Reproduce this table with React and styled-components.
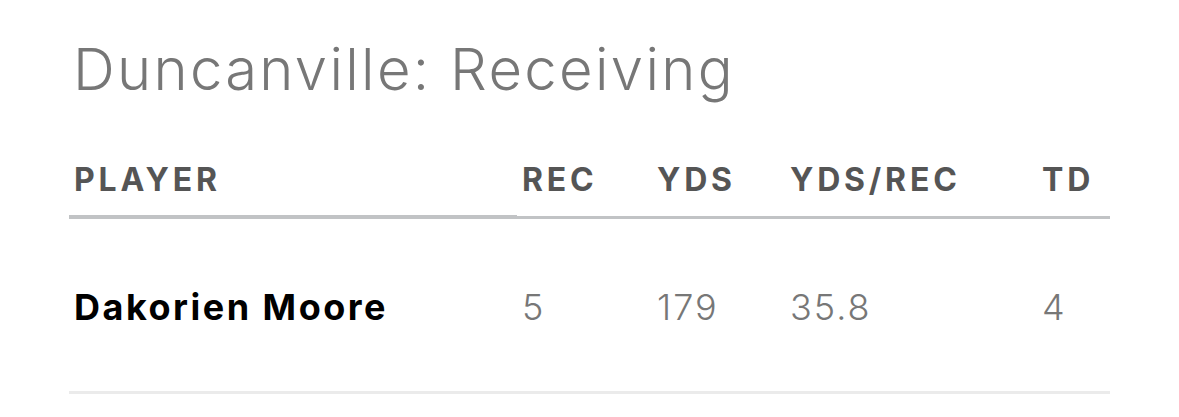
import React from 'react';
import styled, { createGlobalStyle } from 'styled-components';

const GlobalStyle = createGlobalStyle`
  html, body {
    margin: 0;
    padding: 0;
    background: #ffffff;
  }
  body {
    font-family: Inter, "Liberation Sans", sans-serif;
  }
`;

const Page = styled.section`
  width: 1179px;
  height: 417px;
  box-sizing: border-box;
  padding: 33px 69px 0 69px;
  background: #ffffff;
`;

const Title = styled.h2`
  margin: 0 0 0 4px;
  font-size: 58px;
  line-height: 72px;
  font-weight: 300;
  color: #777777;
  letter-spacing: 2.3px;
`;

const StatTable = styled.table`
  margin-top: 55px;
  width: 1041px;
  border-collapse: collapse;
  table-layout: fixed;
`;

const HeadCell = styled.th`
  box-sizing: border-box;
  width: ${p => p.$width}px;
  padding: 0 0 15px 5px;
  text-align: left;
  font-size: 32px;
  line-height: 40px;
  font-weight: 700;
  letter-spacing: 3.8px;
  color: #555555;
  border-bottom: ${p => (p.$first ? 4 : 3)}px solid #c1c3c5;
`;

const Cell = styled.td`
  box-sizing: border-box;
  height: 175px;
  padding: 4px 0 0 5px;
  font-size: 36px;
  font-weight: ${p => (p.$name ? 700 : 300)};
  color: ${p => (p.$name ? '#000000' : '#777777')};
  letter-spacing: ${p => (p.$name ? '2.5px' : '2px')};
  border-bottom: 3px solid #ebebeb;
`;

const columns = [
  { key: 'player', label: 'PLAYER', width: 448 },
  { key: 'rec', label: 'REC', width: 135 },
  { key: 'yds', label: 'YDS', width: 133 },
  { key: 'avg', label: 'YDS/REC', width: 252 },
  { key: 'td', label: 'TD', width: 73 },
];

const rows = [
  { player: 'Dakorien Moore', rec: '5', yds: '179', avg: '35.8', td: '4' },
];

function App() {
  return (
    <Page>
      <GlobalStyle />
      <Title>Duncanville: Receiving</Title>
      <StatTable>
        <thead>
          <tr>
            {columns.map((c, i) => (
              <HeadCell key={c.key} $width={c.width} $first={i === 0}>
                {c.label}
              </HeadCell>
            ))}
          </tr>
        </thead>
        <tbody>
          {rows.map(r => (
            <tr key={r.player}>
              {columns.map(c => (
                <Cell key={c.key} $name={c.key === 'player'}>
                  {r[c.key]}
                </Cell>
              ))}
            </tr>
          ))}
        </tbody>
      </StatTable>
    </Page>
  );
}

export default App;
